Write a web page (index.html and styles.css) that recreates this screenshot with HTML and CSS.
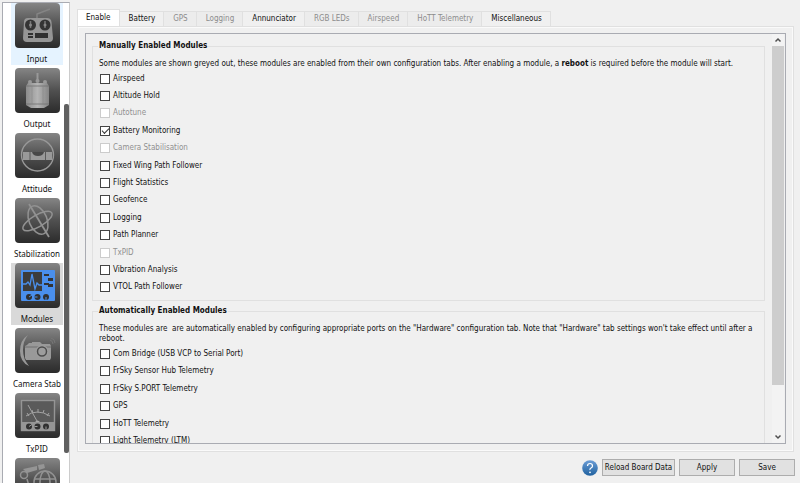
FILE: index.html
```html
<!DOCTYPE html>
<html lang="en">
  <head>
    <meta charset="utf-8" />
    <meta name="viewport" content="width=device-width, initial-scale=1" />
    <title>Configuration | Modules</title>
    <link rel="stylesheet" href="styles.css">
  </head>
  <body>
    <!-- gradient shared by all the sidebar icons -->
    <svg class="defs" aria-hidden="true">
      <defs>
        <linearGradient id="tile" x1="0" y1="0" x2="0" y2="1">
          <stop offset="0" stop-color="#858585" />
          <stop offset="0.5" stop-color="#505050" />
          <stop offset="1" stop-color="#2b2b2b" />
        </linearGradient>
        <linearGradient id="metal" x1="0" y1="0" x2="1" y2="0">
          <stop offset="0" stop-color="#8c8c8c" />
          <stop offset="0.5" stop-color="#b4b4b4" />
          <stop offset="1" stop-color="#858585" />
        </linearGradient>
        <linearGradient id="ball" x1="0" y1="0" x2="0" y2="1">
          <stop offset="0" stop-color="#6c9dd6" />
          <stop offset="1" stop-color="#1f619f" />
        </linearGradient>
      </defs>
    </svg>

    <div class="app">
      <nav class="sidebar">
        <div class="modules">
          <button type="button" class="item hovered">
            <svg viewBox="0 0 45 45">
              <rect width="45" height="45" rx="4" fill="url(#tile)" />
              <path d="M22 16V11L35 6" fill="none" stroke="#858585" stroke-width="1.4" />
              <path d="M13 15H32Q36 15 36.5 19L38 35Q38 39 34 39H12Q8 39 8 35L9 19Q9 15 13 15Z" fill="#959595" />
              <circle cx="15.500" cy="22" r="5.500" fill="#343434" />
              <circle cx="30" cy="22" r="5.500" fill="#343434" />
              <path d="M15.500 18v7M30 18v7" stroke="#777" stroke-width="1.500" />
              <circle cx="15.500" cy="22" r="1.500" fill="#888" />
              <circle cx="30" cy="22" r="1.500" fill="#888" />
              <path d="M13 30h5v2h-5zM13 33h5v2h-5zM20 30h13v5H20z" fill="#303030" />
            </svg>
            <span>Input</span>
          </button>
          <button type="button" class="item">
            <svg viewBox="0 0 45 45">
              <rect width="45" height="45" rx="4" fill="url(#tile)" />
              <path d="M21.500 5h2v8h-2z" fill="#999" />
              <circle cx="15" cy="14" r="2" fill="#999" />
              <circle cx="22.500" cy="13" r="2" fill="#999" />
              <circle cx="30" cy="14" r="2" fill="#999" />
              <path d="M13 15H32L34 18V37L29 40H16L11 37V18Z" fill="url(#metal)" />
              <path d="M11 18H34M11 36H34" stroke="#707070" stroke-width="0.8" />
              <path d="M17 18v18M28 18v18" stroke="#888" stroke-width="0.6" />
            </svg>
            <span>Output</span>
          </button>
          <button type="button" class="item">
            <svg viewBox="0 0 45 45">
              <rect width="45" height="45" rx="4" fill="url(#tile)" />
              <circle cx="22.500" cy="22" r="16" fill="none" stroke="#999" stroke-width="1.4" />
              <path d="M8 19H37V27H8Z" fill="#999" />
              <path d="M17 19H29Q28 23 23 23T17 19Z" fill="#484848" />
              <path d="M15 19v8M30.500 19v8" stroke="#5a5a5a" stroke-width="1" />
            </svg>
            <span>Attitude</span>
          </button>
          <button type="button" class="item">
            <svg viewBox="0 0 45 45">
              <rect width="45" height="45" rx="4" fill="url(#tile)" />
              <g fill="none" stroke="#929292" stroke-width="1.5">
                <ellipse cx="23" cy="22" rx="9" ry="15" transform="rotate(-22 23 22)" />
                <ellipse cx="22.500" cy="23" rx="16.500" ry="6" transform="rotate(-30 22.500 23)" />
                <path d="M14 6L34 39" stroke-width="1.800" />
              </g>
            </svg>
            <span>Stabilization</span>
          </button>
          <button type="button" class="item selected">
            <svg viewBox="0 0 45 45">
              <rect width="45" height="45" rx="4" fill="url(#tile)" />
              <rect x="6" y="7" width="34" height="31" rx="1" fill="#4a8fec" />
              <path d="M8 9H27V28H8Z" fill="#3c3c3c" />
              <path d="M8 21h3l2-2 2 3 2-11 3 15 2-6 2 2h3" fill="none" stroke="#4a8fec" stroke-width="1.3" />
              <path d="M29 11h5v2h-5zM33 15h5v3h-5zM29 20h5v2h-5zM33 21h5v3h-5z" fill="#333" />
              <circle cx="14" cy="34" r="3" fill="#303030" />
              <circle cx="22.500" cy="34" r="3" fill="#303030" />
              <circle cx="31" cy="34" r="3" fill="#303030" />
              <path d="M14 34l3-2M22.500 34h-3M31 34v3" stroke="#4a8fec" />
            </svg>
            <span>Modules</span>
          </button>
          <button type="button" class="item">
            <svg viewBox="0 0 45 45">
              <rect width="45" height="45" rx="4" fill="url(#tile)" />
              <path d="M13 7Q5 12 5 23T14 38Q8 31 8 22T13 7Z" fill="#999" />
              <path d="M12 17L14 15H17V14H25L27 16H35L36 18V30L35 32H11L10 30V18Z" fill="#999" />
              <path d="M10 19H36" stroke="#666" stroke-width="0.8" />
              <circle cx="27" cy="23.500" r="6.500" fill="#9d9d9d" />
              <circle cx="27" cy="23.500" r="4.500" fill="#9d9d9d" stroke="#4c4c4c" stroke-width="1.5" />
              <path d="M35 12Q38 13 38 16M36 10Q40 11 40 15" fill="none" stroke="#777" />
            </svg>
            <span>Camera Stab</span>
          </button>
          <button type="button" class="item">
            <svg viewBox="0 0 45 45">
              <rect width="45" height="45" rx="4" fill="url(#tile)" />
              <rect x="6.500" y="7.500" width="33" height="30" fill="#5a5a5a" stroke="#959595" stroke-width="1.4" />
              <path d="M6 29H40V38H6Z" fill="#959595" />
              <path d="M11 23Q22 15 35 23M13 12L22 28M17 17l1 3M23 16v4M29 17l-1 3M12 20l2 3M34 20l-2 3" fill="none" stroke="#a2a2a2" />
              <path d="M20 29Q22.500 26 25 29Z" fill="#aaa" />
              <circle cx="14" cy="33.500" r="3" fill="#303030" />
              <circle cx="22.500" cy="33.500" r="3" fill="#303030" />
              <circle cx="31" cy="33.500" r="3" fill="#303030" />
              <path d="M14 33.500l3-2M22.500 33.500h-3M31 33.500v3" stroke="#999" />
            </svg>
            <span>TxPID</span>
          </button>
          <button type="button" class="item" aria-label="Autotune">
            <svg viewBox="0 0 45 45">
              <rect width="45" height="45" rx="4" fill="url(#tile)" />
              <g fill="none" stroke="#929292" stroke-width="1.5">
                <circle cx="9" cy="17" r="3.500" />
                <path d="M12 21L14 28" />
                <circle cx="30" cy="24" r="11" />
                <ellipse cx="30" cy="24" rx="5" ry="11" />
                <path d="M19 21H41" />
              </g>
              <path d="M8 11L22 8V12L12 15Z" fill="#959595" />
              <path d="M23 7L29 6L30 10L24 12Z" fill="#959595" />
            </svg>
          </button>
        </div>
        <div class="side-scroll"><div class="side-thumb"></div></div>
      </nav>

      <main class="main">
        <div class="tabs" role="tablist">
          <button type="button" role="tab" class="tab active" aria-selected="true">Enable</button>
          <button type="button" role="tab" class="tab">Battery</button>
          <button type="button" role="tab" class="tab" disabled>GPS</button>
          <button type="button" role="tab" class="tab" disabled>Logging</button>
          <button type="button" role="tab" class="tab">Annunciator</button>
          <button type="button" role="tab" class="tab" disabled>RGB LEDs</button>
          <button type="button" role="tab" class="tab" disabled>Airspeed</button>
          <button type="button" role="tab" class="tab" disabled>HoTT Telemetry</button>
          <button type="button" role="tab" class="tab">Miscellaneous</button>
        </div>

        <div class="pane">
          <form class="frame" id="moduleForm">
            <div class="content">
              <fieldset class="group">
                <legend>Manually Enabled Modules</legend>
                <p>Some modules are shown greyed out, these modules are enabled from their own configuration tabs. After enabling a module, a <b>reboot</b> is required before the module will start.</p>
                <div class="checks manual">
                  <label><input type="checkbox" name="airspeed" />Airspeed</label>
                  <label><input type="checkbox" name="althold" />Altitude Hold</label>
                  <label class="off"><input type="checkbox" name="autotune" disabled />Autotune</label>
                  <label><input type="checkbox" name="battery" checked />Battery Monitoring</label>
                  <label class="off"><input type="checkbox" name="camera" disabled />Camera Stabilisation</label>
                  <label><input type="checkbox" name="fixedwing" />Fixed Wing Path Follower</label>
                  <label><input type="checkbox" name="stats" />Flight Statistics</label>
                  <label><input type="checkbox" name="geofence" />Geofence</label>
                  <label><input type="checkbox" name="logging" />Logging</label>
                  <label><input type="checkbox" name="planner" />Path Planner</label>
                  <label class="off"><input type="checkbox" name="txpid" disabled />TxPID</label>
                  <label><input type="checkbox" name="vibration" />Vibration Analysis</label>
                  <label><input type="checkbox" name="vtol" />VTOL Path Follower</label>
                </div>
              </fieldset>

              <fieldset class="group">
                <legend>Automatically Enabled Modules</legend>
                <p>These modules are&nbsp; are automatically enabled by configuring appropriate ports on the "Hardware" configuration tab. Note that "Hardware" tab settings won't take effect until after a reboot.</p>
                <div class="checks auto">
                  <label><input type="checkbox" name="combridge" />Com Bridge (USB VCP to Serial Port)</label>
                  <label><input type="checkbox" name="frskyhub" />FrSky Sensor Hub Telemetry</label>
                  <label><input type="checkbox" name="frskysport" />FrSky S.PORT Telemetry</label>
                  <label><input type="checkbox" name="gps" />GPS</label>
                  <label><input type="checkbox" name="hott" />HoTT Telemetry</label>
                  <label><input type="checkbox" name="ltm" />Light Telemetry (LTM)</label>
                </div>
              </fieldset>
            </div>
            <div class="scrollbar">
              <svg viewBox="0 0 12 12"><path d="M3.500 7.500L6 5L8.500 7.500" /></svg>
              <div class="track"><div class="thumb"></div></div>
              <svg viewBox="0 0 12 12"><path d="M3.500 4.500L6 7L8.500 4.500" /></svg>
            </div>
          </form>
        </div>

        <div class="actions">
          <button type="button" class="help" aria-label="Help">
            <svg viewBox="0 0 16 16">
              <circle cx="8" cy="8" r="7.800" fill="url(#ball)" />
              <path d="M5.500 6Q5.500 3.500 8 3.500T10.500 6Q10.500 7.200 9 8T8 10" fill="none" stroke="#fff" stroke-width="1.2" />
              <circle cx="8" cy="12.300" r="0.900" fill="#fff" />
            </svg>
          </button>
          <button type="button" class="btn reload">Reload Board Data</button>
          <button type="button" class="btn">Apply</button>
          <button type="submit" form="moduleForm" class="btn">Save</button>
        </div>
      </main>
    </div>
  </body>
</html>
```
FILE: styles.css
```css
* {
    box-sizing: border-box;
}

body {
    margin: 0;
    background-color: #f0f0f0;
    color: #111;
    font-family: "DejaVu Sans Condensed", "DejaVu Sans", sans-serif;
    font-size: 8px;
    line-height: 12px;
}

button {
    font: inherit;
    color: inherit;
    padding: 0;
    border: none;
    background: none;
}

.defs {
    position: absolute;
    width: 0;
    height: 0;
}

.app {
    display: flex;
    height: 100vh;
    overflow: hidden;
}

/* left icon list */
.sidebar {
    display: flex;
    flex: none;
    width: 68px;
    margin: 2px 0 0 2px;
    border: 1px solid #a9abb2;
    border-bottom: none;
    border-right-color: #ccc;
    background-color: #fff;
    overflow: hidden;
}

.modules {
    display: flex;
    flex-direction: column;
    gap: 3px;
    width: 60px;
    padding-left: 8px;
}

.item {
    display: flex;
    flex: none;
    flex-direction: column;
    align-items: center;
    gap: 5px;
    height: 62px;
    font-family: "Noto Sans", sans-serif;
    white-space: nowrap;
}

.item svg {
    flex: none;
    width: 45px;
    height: 45px;
}

.hovered {
    background-color: #e5f3ff;
}

.selected {
    background-color: #d9d9d9;
}

.side-scroll {
    flex: 1;
    padding-top: 101px;
}

.side-thumb {
    width: 5px;
    height: 349px;
    margin-left: 1px;
    border-radius: 2px;
    background-color: #606060;
}

/* right side */
.main {
    display: flex;
    flex: 1;
    flex-direction: column;
    min-width: 0;
    padding: 9px 5px 7px 7px;
}

.tabs {
    display: flex;
    align-items: flex-end;
}

.tab {
    height: 15px;
    padding: 0 8px 0 9px;
    border: 1px solid #e0e0e0;
    border-width: 1px 1px 0 0;
    white-space: nowrap;
}

.tab:disabled {
    color: #8c8c8c;
    background-color: #ececec;
}

.tab.active {
    height: 17px;
    padding: 0 8px;
    border-left-width: 1px;
    background-color: #fff;
}

.pane {
    display: flex;
    flex: 1;
    min-height: 0;
    margin-right: 1px;
    padding: 6px 7px 7px;
    border: 1px solid #e0e0e0;
    box-shadow: inset 0 0 0 1px #fafafa;
}

.frame {
    display: flex;
    flex: 1;
    min-width: 0;
    border: 1px solid #a9abb2;
    overflow: hidden;
}

.content {
    flex: 1;
    min-width: 0;
    padding: 6px 7px 0 6px;
}

.group {
    margin: 0 0 4px;
    padding: 7px 6px 4px;
    border: 1px solid #e0e0e0;
}

.group legend {
    margin-left: -1px;
    padding: 0 1px;
    font-weight: bold;
}

.group p {
    margin: 0 0 1px;
    line-height: 10px;
}

.checks {
    display: grid;
    grid-auto-rows: 1fr;
    align-items: center;
    justify-content: start;
    padding-left: 1px;
}

.manual {
    height: 226px;
}

.auto {
    height: 105px;
}

.checks label {
    display: flex;
    align-items: center;
    gap: 3px;
}

.checks .off {
    color: #909090;
}

input[type='checkbox'] {
    appearance: none;
    width: 10px;
    height: 10px;
    margin: 0;
    border: 1px solid #444;
    background-color: #fff;
}

input[type='checkbox']:disabled {
    border-color: #ccc;
}

input[type='checkbox']:checked::before {
    content: "";
    display: block;
    width: 6px;
    height: 3px;
    margin: 1px;
    border: 1px solid #333;
    border-width: 0 0 1px 1px;
    transform: rotate(-45deg);
}

.scrollbar {
    display: flex;
    flex-direction: column;
    width: 12px;
    margin-right: 1px;
    background-color: #f3f3f3;
}

.scrollbar svg {
    width: 12px;
    height: 12px;
    fill: none;
    stroke: #505050;
    stroke-width: 1.5;
}

.track {
    flex: 1;
}

.thumb {
    height: 88%;
    background-color: #cdcdcd;
}

/* bottom buttons */
.actions {
    display: flex;
    justify-content: flex-end;
    align-items: center;
    gap: 4px;
    padding-top: 7px;
}

.help {
    width: 16px;
    height: 16px;
}

.help svg {
    display: block;
}

.btn {
    width: 56px;
    height: 17px;
    border: 1px solid #adadad;
    background-color: #e1e1e1;
    white-space: nowrap;
}

.reload {
    width: 73px;
}
```
